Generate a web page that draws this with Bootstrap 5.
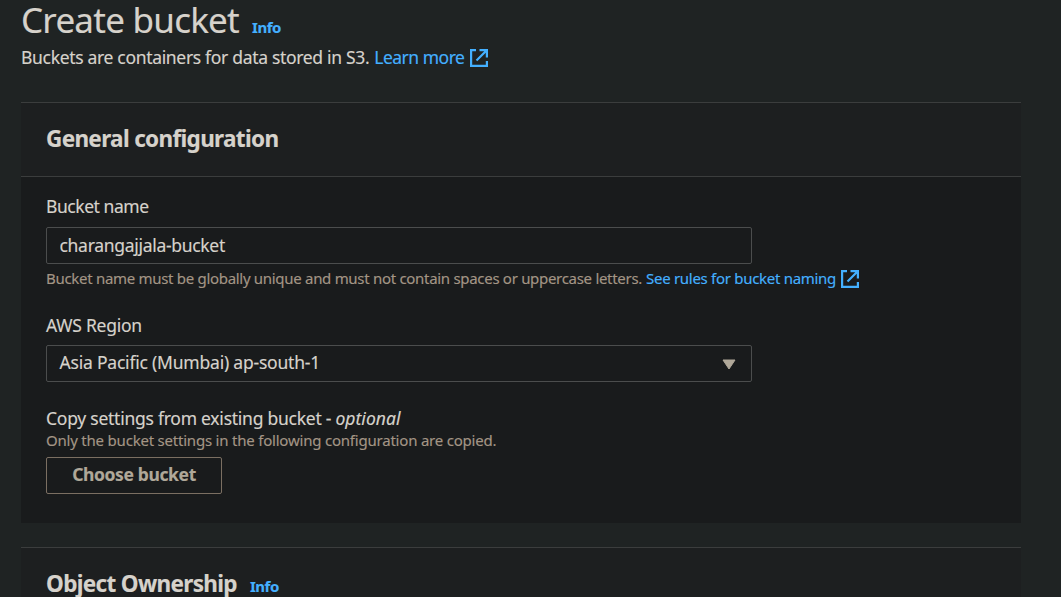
<!DOCTYPE html>
<html lang="en">
<head>
<meta charset="utf-8">
<meta name="viewport" content="width=device-width, initial-scale=1">
<title>Create bucket</title>
<link href="https://cdn.jsdelivr.net/npm/bootstrap@5.3.0/dist/css/bootstrap.min.css" rel="stylesheet">
<style>
body{background:#1f2323;color:#d6d2cb;font-family:"Noto Sans",sans-serif;font-size:17.5px;line-height:25px;height:597px;overflow:hidden;-webkit-text-stroke:.15px}
main{width:1000px;margin-left:21px}
a{color:#44b0ff;text-decoration:none}
a svg{width:18px;height:18px;flex:none}
h1{font-size:35px;line-height:40px;font-weight:400;letter-spacing:-.75px}
h2{font-size:22.5px;line-height:30px;font-weight:700;letter-spacing:-.66px}
.info-link{font-size:15px;line-height:18px;font-weight:700;letter-spacing:-.44px;margin-left:13px}
.intro{margin:5px 0 32px;letter-spacing:-.32px}
.intro a{letter-spacing:-.5px;margin-left:5px}
.intro svg{margin-left:6px}
.panel{background:#191b1c;margin-bottom:24px}
.panel-head{background:#1d1f20;border-top:1px solid #3b3d3d;border-bottom:1px solid #3b3d3d;padding:21px 25px 22px}
.panel-content{padding:17px 25px 29px}
.name-label{letter-spacing:-.45px;margin-bottom:8px}
.region-label{letter-spacing:-.24px;margin:25px 0 7px}
.copy-label{letter-spacing:-.25px;line-height:24px;margin-top:24px}
.copy-label i{letter-spacing:.03px}
.field{width:706px;height:37px;border:1px solid #4b4d4d;border-radius:2px;background:#191b1c;color:#d6d2cb;padding:0 15px 2px 12.5px;font-size:17.5px;letter-spacing:-.3px}
.field:focus{background:#191b1c;color:#d6d2cb}
.region{letter-spacing:-.21px}
.caret{margin-top:3px}
.hint{font-size:15px;line-height:20px;color:#a39585;letter-spacing:-.3px}
.hint a{letter-spacing:-.29px;margin-left:4px}
.hint svg{margin:1px 0 -1px 5px}
.copy-hint{letter-spacing:-.21px;margin-bottom:7px}
.choose{width:176px;height:37px;border:1px solid #7b6f62;border-radius:2px;color:#b0a899;font-size:17.5px;line-height:33px;font-weight:700;letter-spacing:-.38px;padding:0 0 2px}
</style>
</head>
<body>
<svg class="d-none"><symbol id="external" viewBox="0 0 18 18"><path d="M6 1.100H1.100v15.800h15.800V12M9.500 1.100h7.400v7.400M16.500 1.500 6.500 11.500" fill="none" stroke="currentColor" stroke-width="2.2"/></symbol></svg>
<main>
<h1 class="mb-0 d-flex align-items-baseline"><span>Create bucket</span><a class="info-link" href="#">Info</a></h1>
<div class="intro d-flex"><span>Buckets are containers for data stored in S3.</span><a href="#" class="d-flex align-items-center">Learn more<svg><use href="#external"/></svg></a></div>
<section class="panel">
<div class="panel-head"><h2 class="mb-0">General configuration</h2></div>
<div class="panel-content">
<label class="name-label d-block" for="bucket">Bucket name</label>
<input id="bucket" class="field form-control shadow-none" value="charangajjala-bucket">
<div class="hint d-flex mt-1"><span>Bucket name must be globally unique and must not contain spaces or uppercase letters.</span><a href="#" class="d-flex align-items-center">See rules for bucket naming<svg><use href="#external"/></svg></a></div>
<div class="region-label">AWS Region</div>
<div class="field region d-flex align-items-center justify-content-between"><span>Asia Pacific (Mumbai) ap-south-1</span><svg class="caret" width="14" height="11" viewBox="0 0 14 11"><path d="M1 1h12L7 10z" fill="#b0a899" stroke="#b0a899" stroke-linejoin="round"/></svg></div>
<div class="copy-label">Copy settings from existing bucket - <i>optional</i></div>
<div class="hint copy-hint">Only the bucket settings in the following configuration are copied.</div>
<button class="btn choose d-block" type="button">Choose bucket</button>
</div>
</section>
<section class="panel">
<div class="panel-head"><h2 class="mb-0 d-flex align-items-baseline"><span>Object Ownership</span><a class="info-link" href="#">Info</a></h2></div>
</section>
</main>
<script src="https://cdn.jsdelivr.net/npm/bootstrap@5.3.0/dist/js/bootstrap.bundle.min.js"></script>
</body>
</html>
